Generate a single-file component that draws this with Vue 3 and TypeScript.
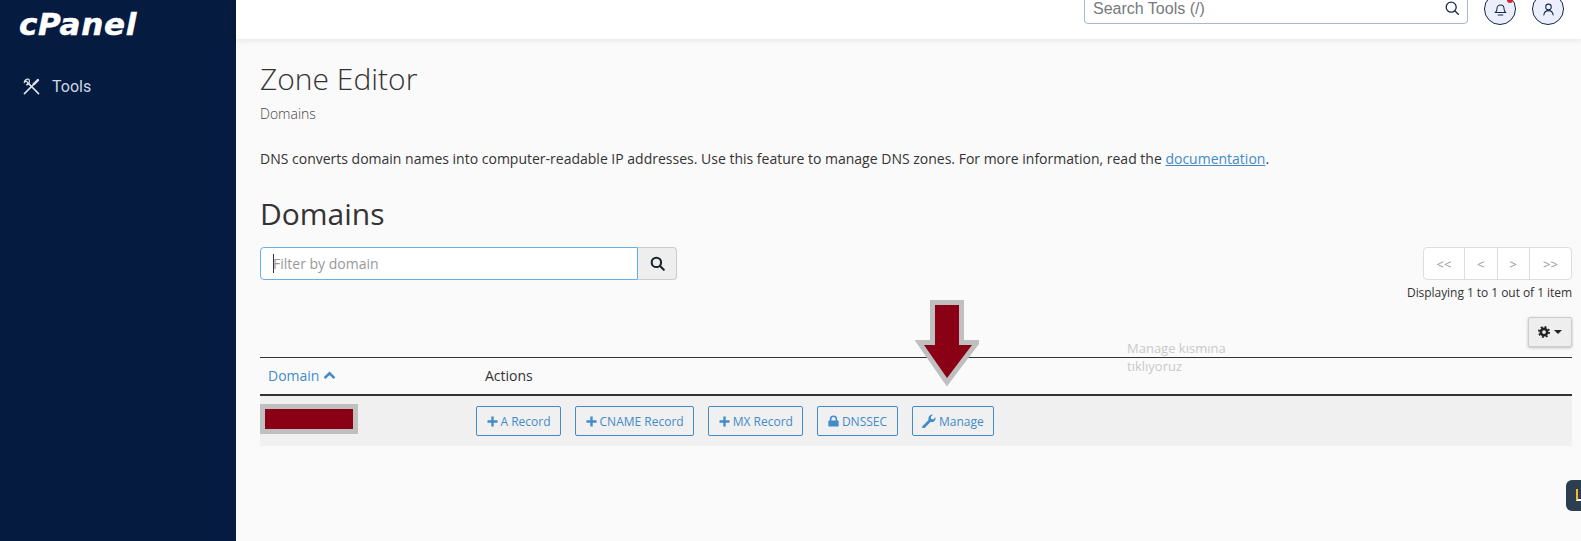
<script setup lang="ts">
interface Action { label: string; icon: 'plus' | 'lock' | 'wrench' }
const actions: Action[] = [
  { label: 'A Record', icon: 'plus' },
  { label: 'CNAME Record', icon: 'plus' },
  { label: 'MX Record', icon: 'plus' },
  { label: 'DNSSEC', icon: 'lock' },
  { label: 'Manage', icon: 'wrench' },
]
const pages = ['<<', '<', '>', '>>']
</script>

<template>
  <div class="page">
    <aside class="sidebar">
      <div class="logo">cPanel</div>
      <nav class="nav">
        <svg class="tools-icon" viewBox="0 0 18 18" fill="none" stroke="#dbe1ea" stroke-width="1.700" stroke-linecap="round" stroke-linejoin="round">
          <path d="M6 6 16.500 16.500" />
          <path d="M6.300 1.300C3.800.6 1.300 2.300 1.300 4.800L3.200 3 5.500 5.300 3.700 7.200C6.200 7.200 7.600 4 6.300 1.300Z" stroke-width="1.300" />
          <path d="M1.500 16.500 10.500 7.500" />
          <path d="M11.500 6.500 15.800 2.200" stroke-width="2.700" />
        </svg>
        <span>Tools</span>
      </nav>
    </aside>

    <div class="main">
      <header class="topbar">
        <div class="search-tools">
          <span>Search Tools (/)</span>
          <svg viewBox="0 0 14 14" width="14" height="14" fill="none" stroke="#12284c" stroke-width="1.300" stroke-linecap="round">
            <circle cx="6.200" cy="6.200" r="5" />
            <path d="m10 10 3.300 3.300" />
          </svg>
        </div>
        <div class="circle bell">
          <svg viewBox="0 0 14 14" width="13" height="13" fill="none" stroke="#12284c" stroke-width="1.100" stroke-linecap="round">
            <path d="M1.500 10.300c1-1 1.700-2 1.700-4.100 0-2.200 1.500-4 3.800-4s3.800 1.800 3.800 4c0 2.100.7 3.100 1.700 4.100Z" />
            <path d="M4.500 13h5" />
          </svg>
          <i class="dot"></i>
        </div>
        <div class="circle">
          <svg viewBox="0 0 14 14" width="13" height="13" fill="none" stroke="#12284c" stroke-width="1.100" stroke-linecap="round">
            <circle cx="7" cy="4.200" r="3" />
            <path d="M2 13c.3-3 2-4.800 5-4.800s4.700 1.800 5 4.800" />
          </svg>
        </div>
      </header>

      <main class="content">
        <h1 class="title">Zone Editor</h1>
        <div class="crumb">Domains</div>
        <p class="intro">
          DNS converts domain names into computer-readable IP addresses. Use this feature to manage DNS zones. For more information, read the <a class="doc">documentation</a>.
        </p>
        <h2 class="section">Domains</h2>

        <div class="tools-row">
          <div class="filter">
            <div class="filter-input"><i class="caret"></i><span>Filter by domain</span></div>
            <div class="filter-btn">
              <svg viewBox="0 0 16 16" width="15" height="15" fill="none" stroke="#1c2230" stroke-width="2.200" stroke-linecap="round">
                <circle cx="6.800" cy="6.800" r="5" />
                <path d="m10.700 10.700 4 4" />
              </svg>
            </div>
          </div>
          <div class="paging">
            <div class="pager">
              <span v-for="p in pages" :key="p" class="pg">{{ p }}</span>
            </div>
            <div class="count">Displaying 1 to 1 out of 1 item</div>
            <div class="gear-btn">
              <svg viewBox="0 0 16 16" width="12" height="12">
                <circle cx="8" cy="8" r="4.200" fill="none" stroke="#222" stroke-width="3.400" />
                <circle cx="8" cy="8" r="6.800" fill="none" stroke="#222" stroke-width="2.400" stroke-dasharray="2.600 2.740" />
              </svg>
              <i class="down"></i>
            </div>
          </div>
        </div>

        <div class="table">
          <div class="thead">
            <div class="col-domain th-link">
              Domain
              <svg viewBox="0 0 14 10" width="13" height="9" fill="none" stroke="#428bca" stroke-width="2.800">
                <path d="M1.500 8 7 2.500 12.500 8" />
              </svg>
            </div>
            <div class="col-actions">Actions</div>
          </div>
          <div class="trow">
            <div class="col-domain"><div class="redacted"></div></div>
            <div class="col-actions btns">
              <button v-for="a in actions" :key="a.label" class="act" type="button">
                <svg v-if="a.icon === 'plus'" viewBox="0 0 12 12" width="11" height="11" fill="none" stroke="#428bca" stroke-width="2.600">
                  <path d="M6 .5v11M.5 6h11" />
                </svg>
                <svg v-else-if="a.icon === 'lock'" viewBox="0 0 12 12" width="11" height="12" fill="#428bca">
                  <path d="M1 5.500h1V4a4 4 0 0 1 8 0v1.500h1a.6.6 0 0 1 .6.6v5.300a.6.6 0 0 1-.6.6H1a.6.6 0 0 1-.6-.6V6.100A.6.6 0 0 1 1 5.500Zm2.700 0h4.600V4a2.300 2.300 0 0 0-4.600 0Z" />
                </svg>
                <svg v-else viewBox="0 0 12 12" width="14" height="14" fill="#428bca">
                  <path d="M.5 10.200 5.600 5.100C5 3 6.300.4 9.500.4l-2 2.200.4 1.700 1.700.4 2-2c.4 3-2 4.700-4.300 4.100L2.200 12a1.200 1.200 0 0 1-1.700-1.800Z" />
                </svg>
                <span>{{ a.label }}</span>
              </button>
            </div>
          </div>
        </div>

        <svg class="arrow" viewBox="0 0 64 90" width="64" height="90">
          <path class="arrow-shape" d="M20 7H44V47H57L32 80 9 47H20Z" />
        </svg>
        <div class="note">Manage kısmına<br />tıklıyoruz</div>
      </main>
    </div>
    <div class="widget"><i></i></div>
  </div>
</template>

<style>
html, body { margin: 0; padding: 0; background: #fafafa; }
</style>

<style scoped>
.page {
  position: relative;
  display: flex;
  width: 1581px;
  height: 541px;
  overflow: hidden;
  background: #fafafa;
  font-family: "Open Sans", sans-serif;
  color: #333;
  font-size: 14px;
}
.sidebar {
  flex: 0 0 236px;
  background: #051b3f;
  color: #cfd7e4;
  font-family: Roboto, sans-serif;
}
.logo {
  margin: 6px 0 0 19px;
  height: 36px;
  line-height: 36px;
  font-family: "DejaVu Sans", sans-serif;
  font-weight: 700;
  font-style: italic;
  font-size: 31px;
  letter-spacing: .7px;
  -webkit-text-stroke: .5px #fff;
  color: #fff;
}
.nav {
  display: flex;
  align-items: center;
  gap: 12px;
  margin: 32px 0 0 23px;
  font-size: 16px;
  height: 24px;
}
.tools-icon { width: 17px; height: 17px; }
.main { flex: 1; display: flex; flex-direction: column; min-width: 0; }
.topbar {
  flex: 0 0 39px;
  box-sizing: border-box;
  display: flex;
  justify-content: flex-end;
  align-items: flex-end;
  gap: 16px;
  padding: 0 17px 14px 0;
  background: #fff;
  box-shadow: 0 1px 6px rgba(0, 0, 0, .1);
  overflow: hidden;
  position: relative;
}
.search-tools {
  box-sizing: border-box;
  flex: 0 0 384px;
  height: 40px;
  display: flex;
  align-items: flex-end;
  justify-content: space-between;
  padding: 0 8px 6px 8px;
  margin-bottom: 1px;
  border: 1px solid #a9b8cf;
  border-radius: 4px;
  font-family: "Liberation Sans", sans-serif;
  font-size: 16px;
  color: #77797e;
  line-height: 16px;
}
.search-tools svg { margin-bottom: 2px; }
.circle {
  position: relative;
  box-sizing: border-box;
  flex: 0 0 32px;
  width: 32px;
  height: 32px;
  border: 1px solid #12284c;
  border-radius: 50%;
  background: #eceffb;
  display: flex;
  align-items: center;
  justify-content: center;
}
.dot {
  position: absolute;
  top: 3px;
  right: 2px;
  width: 6px;
  height: 6px;
  border-radius: 50%;
  background: #d8202f;
}
.content {
  position: relative;
  flex: 1;
  padding: 0 9px 0 24px;
}
.title {
  margin: 22px 0 0;
  font-size: 30px;
  line-height: 36px;
  font-weight: 300;
  color: #333;
}
.crumb {
  margin-top: 7px;
  font-size: 14px;
  line-height: 20px;
  font-weight: 300;
  color: #444;
}
.intro {
  margin: 25px 0 0;
  font-size: 14px;
  line-height: 20px;
  white-space: nowrap;
}
.doc { color: #428bca; text-decoration: underline; }
.section {
  margin: 27px 0 0;
  font-size: 30px;
  line-height: 36px;
  font-weight: 400;
  color: #333;
}
.tools-row {
  display: flex;
  justify-content: space-between;
  align-items: flex-start;
  margin-top: 15px;
}
.filter { display: flex; width: 417px; height: 33px; }
.filter-input {
  box-sizing: border-box;
  flex: 1;
  display: flex;
  align-items: center;
  padding-left: 12px;
  background: #fff;
  border: 1px solid #66afe9;
  border-radius: 4px 0 0 4px;
  font-size: 14px;
  color: #999;
  position: relative;
}
.caret {
  position: absolute;
  left: 12px;
  top: 6px;
  width: 1px;
  height: 19px;
  background: #333;
}
.filter-btn {
  box-sizing: border-box;
  flex: 0 0 39px;
  display: flex;
  align-items: center;
  justify-content: center;
  background: #eee;
  border: 1px solid #ccc;
  border-left: 0;
  border-radius: 0 4px 4px 0;
}
.paging { display: flex; flex-direction: column; align-items: flex-end; }
.pager {
  box-sizing: border-box;
  display: flex;
  width: 149px;
  height: 33px;
  background: #fff;
  border: 1px solid #ddd;
  border-radius: 4px;
}
.pg {
  flex: 1;
  display: flex;
  align-items: center;
  justify-content: center;
  font-size: 13px;
  color: #999;
  border-left: 1px solid #ddd;
}
.pg:first-child { border-left: 0; flex: 0 0 40px; }
.pg:last-child { flex: 0 0 41px; }
.count {
  margin-top: 4px;
  font-size: 12px;
  line-height: 17px;
  color: #333;
  white-space: nowrap;
  letter-spacing: -.05px;
}
.gear-btn {
  box-sizing: border-box;
  display: flex;
  align-items: center;
  justify-content: center;
  gap: 4px;
  width: 44px;
  height: 30px;
  margin-top: 16px;
  background: #eee;
  border: 1px solid #ccc;
  border-radius: 2px;
  box-shadow: 0 1px 3px rgba(0, 0, 0, .25);
}
.down {
  width: 0;
  height: 0;
  border-left: 4px solid transparent;
  border-right: 4px solid transparent;
  border-top: 4px solid #222;
}
.table { margin-top: 10px; }
.thead {
  box-sizing: border-box;
  display: flex;
  height: 39px;
  align-items: center;
  padding-bottom: 2px;
  border-top: 1px solid #333;
  border-bottom: 2px solid #333;
}
.col-domain { flex: 0 0 216px; display: flex; align-items: center; }
.th-link { padding-left: 8px; box-sizing: border-box; gap: 4px; color: #428bca; }
.col-actions { flex: 1; padding-left: 9px; }
.trow {
  display: flex;
  height: 50px;
  align-items: center;
  background: #f0f0f0;
}
.trow .col-actions { padding-left: 0; }
.redacted {
  width: 88px;
  height: 20px;
  background: #8a0015;
  border: 5px solid #c0c0c0;
  margin-top: -4px;
}
.btns { display: flex; gap: 14px; }
.act {
  box-sizing: border-box;
  display: inline-flex;
  align-items: center;
  gap: 3px;
  height: 30px;
  padding: 0 9.500px;
  background: transparent;
  border: 1px solid #428bca;
  border-radius: 2px;
  color: #428bca;
  font-family: "Open Sans", sans-serif;
  font-size: 12px;
}
.arrow {
  position: absolute;
  left: 679px;
  top: 259px;
}
.arrow-shape {
  fill: #8a0015;
  stroke: #bfbfbf;
  stroke-width: 10;
  stroke-linejoin: miter;
  stroke-miterlimit: 3;
  paint-order: stroke;
}
.note {
  position: absolute;
  left: 891px;
  top: 300px;
  font-size: 13px;
  line-height: 18px;
  color: #c9c9c9;
}
.widget {
  position: absolute;
  right: 0;
  top: 480px;
  width: 15px;
  height: 31px;
  border-radius: 6px 0 0 6px;
  background: #2c3e50;
}
.widget i {
  position: absolute;
  left: 10px;
  top: 9px;
  width: 5px;
  height: 12px;
  box-sizing: border-box;
  border-left: 2px solid #f5b921;
  border-bottom: 2px solid #fff;
}
</style>
